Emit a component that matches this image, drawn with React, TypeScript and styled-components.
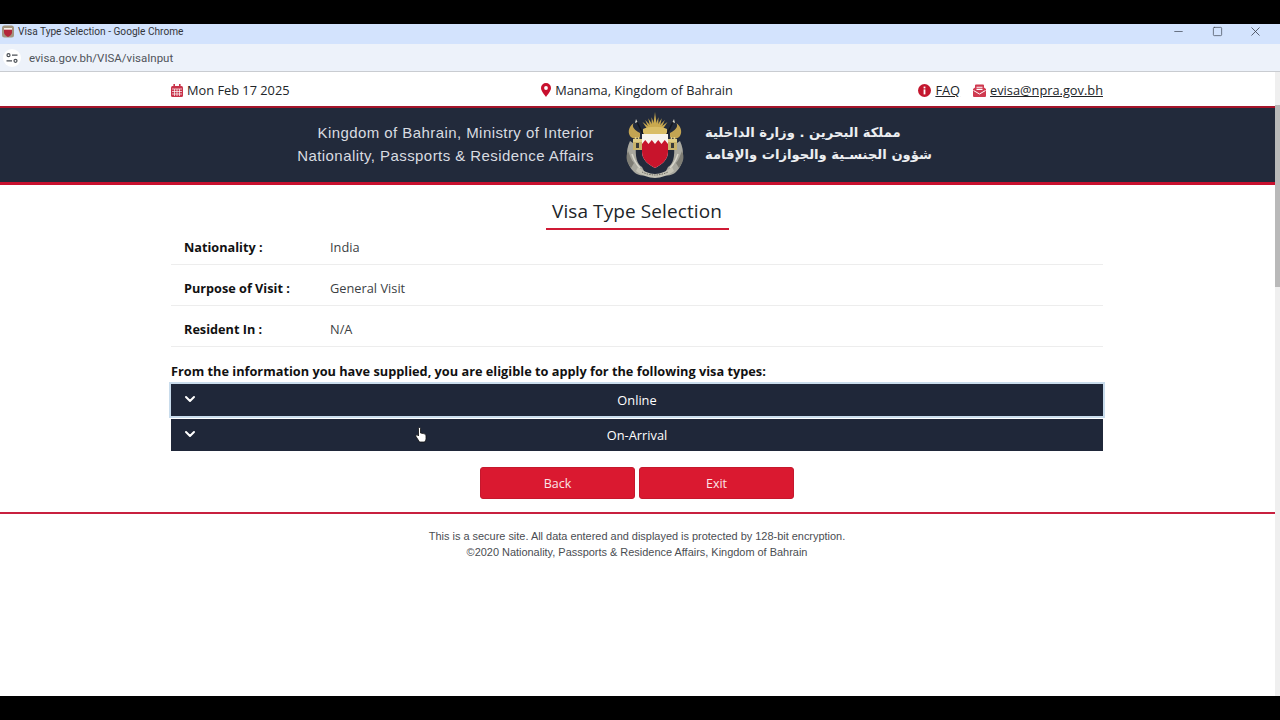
import React from 'react'
import styled, { createGlobalStyle } from 'styled-components'
import { ChevronDown, Minus, Square, X } from 'lucide-react'

const GlobalStyle = createGlobalStyle`
  html, body {
    margin: 0;
    height: 100%;
    overflow: hidden;
    background: #000;
    font-family: "Open Sans", "Noto Sans", sans-serif;
  }
`

const Screen = styled.div`
  width: 1280px;
  height: 720px;
  padding: 24px 0;
  box-sizing: border-box;
  background: #000;
  display: flex;
  flex-direction: column;
`

const TitleBar = styled.div`
  height: 20px;
  flex: none;
  box-sizing: border-box;
  padding: 0 5px 6px 2px;
  display: flex;
  align-items: center;
  background: #d3e3fd;
  color: #33363b;
  font-family: Roboto, sans-serif;
  font-size: 10.15px;
`

const TitleText = styled.span`
  margin-left: 4px;
  flex: 1;
`

const WindowButton = styled.span`
  width: 38.5px;
  display: flex;
  justify-content: center;
  color: #3c4350;
`

const AddressBar = styled.div`
  height: 28px;
  flex: none;
  display: flex;
  align-items: center;
  background: #edf2fa;
  border-bottom: 1px solid #c9ccd1;
  box-sizing: border-box;
  color: #50545a;
  font-family: Roboto, sans-serif;
  font-size: 11.5px;
  padding: 1px 0 0 3px;
`

const SiteControls = styled.span`
  width: 18px;
  height: 18px;
  margin-right: 8px;
  border-radius: 50%;
  background: #fff;
  display: flex;
  align-items: center;
  justify-content: center;
`

const Viewport = styled.div`
  flex: 1;
  display: flex;
  background: #fff;
  min-height: 0;
`

const Page = styled.div`
  flex: 1;
  min-width: 0;
  display: flex;
  flex-direction: column;
`

const Scrollbar = styled.div`
  width: 5px;
  flex: none;
  background: #efefef;
  padding-top: 33px;
`

const ScrollThumb = styled.div`
  height: 182px;
  background: #b9b9b9;
`

const TopInfo = styled.div`
  height: 34px;
  flex: none;
  box-sizing: border-box;
  padding-top: 2px;
  width: 932px;
  margin-left: 171px;
  display: grid;
  grid-template-columns: 1fr auto 1fr;
  align-items: center;
  font-size: 12.8px;
  color: #212529;
`

const InfoItem = styled.span`
  display: inline-flex;
  align-items: center;
  gap: 4px;
`

const InfoLinks = styled.div`
  display: flex;
  justify-content: flex-end;
  gap: 13px;
`

const InfoLink = styled.a`
  color: #212529;
  text-decoration: underline;
`

const Banner = styled.header`
  height: 79px;
  flex: none;
  box-sizing: border-box;
  background: #222a3b;
  border-top: 2px solid #a5142a;
  border-bottom: 3px solid #c8102e;
  display: flex;
  align-items: center;
  padding: 0 0 2px 297px;
`

const BannerEnglish = styled.div`
  width: 297px;
  text-align: right;
  white-space: nowrap;
  color: #d9dce1;
  font-family: "Liberation Sans", Arial, sans-serif;
  font-size: 15px;
  letter-spacing: 0.43px;
  line-height: 23px;
`

const Emblem = styled.svg`
  width: 70px;
  height: 74px;
  margin: 0 15px 0 26px;
  flex: none;
`

const BannerArabic = styled.div`
  width: 228px;
  color: #eceef1;
  font-family: "DejaVu Sans", sans-serif;
  font-size: 13.15px;
  font-weight: 700;
  line-height: 22px;
  direction: rtl;
  text-align: left;
  white-space: nowrap;
`

const Content = styled.main`
  width: 932px;
  margin-left: 171px;
`

const TitleWrap = styled.div`
  display: flex;
  justify-content: center;
  margin-top: 12px;
`

const PageTitle = styled.h1`
  width: 183px;
  margin: 0;
  height: 33px;
  box-sizing: border-box;
  border-bottom: 2px solid #cf1a35;
  font-size: 19px;
  font-weight: 400;
  line-height: 29px;
  letter-spacing: 0.1px;
  text-align: center;
  color: #212529;
`

const Row = styled.div`
  height: 35px;
  box-sizing: border-box;
  padding: 0 0 1px 13px;
  border-bottom: 1px solid #ededed;
  display: flex;
  align-items: center;
  font-size: 12.8px;
  color: #3c3f44;

  & + & {
    margin-top: 6px;
  }
`

const RowLabel = styled.span`
  width: 146px;
  font-size: 12.7px;
  font-weight: 700;
  color: #111;
`

const Eligible = styled.p`
  margin: 15px 0 4px;
  font-size: 12.75px;
  line-height: 18px;
  font-weight: 700;
  color: #111;
`

const Accordion = styled.div`
  display: flex;
  flex-direction: column;
  gap: 3px;
`

const AccordionBar = styled.button<{ $focused?: boolean }>`
  position: relative;
  width: 100%;
  height: 32px;
  border: 0;
  padding: 0;
  background: #1f2739;
  color: #fff;
  font-family: inherit;
  font-size: 12.8px;
  outline: ${(p) => (p.$focused ? '2px solid #c9dcec' : 'none')};
`

const Chevron = styled.span`
  position: absolute;
  left: 11px;
  top: 7px;
  display: flex;
`

const Cursor = styled.svg`
  position: absolute;
  left: 244px;
  top: 8px;
  width: 12px;
  height: 16px;
`

const Buttons = styled.div`
  display: flex;
  justify-content: center;
  gap: 4px;
  margin-top: 16px;
`

const RedButton = styled.button`
  width: 155px;
  height: 32px;
  box-sizing: border-box;
  border: 1px solid #c5182d;
  border-radius: 3px;
  background: #da1930;
  color: #fbe4e6;
  font-family: inherit;
  font-size: 12.5px;
`

const Footer = styled.footer`
  margin-top: 13px;
  border-top: 2px solid #c8203f;
  padding: 14px 1px 0 0;
  text-align: center;
  font-family: "Liberation Sans", Arial, sans-serif;
  font-size: 10.95px;
  line-height: 16px;
  color: #4a4d52;
  box-sizing: border-box;
`

const CalendarIcon = () => (
  <svg width="12" height="13" viewBox="0 0 12 13">
    <rect x="0" y="2" width="12" height="11" rx="1.5" fill="#c8334a" />
    <rect x="2.4" y="0" width="1.6" height="3" fill="#c8334a" />
    <rect x="8" y="0" width="1.6" height="3" fill="#c8334a" />
    <path d="M1 5h10M1 7.5h10M1 10h10M3.5 5v7M6 5v7M8.5 5v7" stroke="#fff" strokeWidth="0.7" />
  </svg>
)

const PinIcon = () => (
  <svg width="10" height="14" viewBox="0 0 10 14">
    <path d="M5 0a5 5 0 0 1 5 5c0 3-3.4 6.6-5 9-1.600-2.400-5-6-5-9a5 5 0 0 1 5-5z" fill="#c8102e" />
    <circle cx="5" cy="5" r="1.9" fill="#fff" />
  </svg>
)

const InfoIcon = () => (
  <svg width="13" height="13" viewBox="0 0 13 13">
    <circle cx="6.500" cy="6.500" r="6.500" fill="#c4162e" />
    <rect x="5.600" y="2.600" width="1.800" height="1.800" fill="#fff" />
    <rect x="5.600" y="5.400" width="1.800" height="5" fill="#fff" />
  </svg>
)

const MailIcon = () => (
  <svg width="13" height="13" viewBox="0 0 13 13">
    <path d="M0 5l2-1.500V1.500A1 1 0 0 1 3 .5h7a1 1 0 0 1 1 1V3.500L13 5v7a1 1 0 0 1-1 1H1a1 1 0 0 1-1-1z" fill="#cf3a50" />
    <path d="M3.500 3.200h6M3.500 5.400h6" stroke="#fff" strokeWidth="1.100" />
    <path d="M.5 6.500l6 3.500 6-3.500" stroke="#fff" strokeWidth="1" fill="none" />
  </svg>
)

const Favicon = () => (
  <svg width="12" height="13" viewBox="0 0 12 13">
    <rect x="0" y="0.500" width="12" height="12" rx="2.500" fill="#a3957f" />
    <path d="M2 3h8v4.500c0 2-2.400 3.500-4 4.500-1.600-1-4-2.500-4-4.500z" fill="#b3263a" />
    <path d="M2 3h8v1.700H2z" fill="#f3efe8" />
  </svg>
)

const TuneIcon = () => (
  <svg width="12" height="10" viewBox="0 0 12 10" fill="none" stroke="#4a4f55" strokeWidth="1.200">
    <circle cx="2.500" cy="2.200" r="1.500" />
    <path d="M6 2.200h5.500M.5 7.800h5.500" />
    <circle cx="9.500" cy="7.800" r="1.500" />
  </svg>
)

const crownRays = [-44, -33, -22, -11, 0, 11, 22, 33, 44]

// shield, towers and mantling of the coat of arms, mirrored around x = 35
const EmblemSide = () => (
  <>
    <path d="M20 26C12 22 12 18 14 16c-4 2-7 8-4 13 2 3 6 3 10 1z" fill="#c3a452" />
    <path d="M10 34C5 44 6 58 14 65c3 3 8 4 12 3l-4-8c-5-3-7-10-6-22z" fill="#a9a89f" />
    <path d="M8 44c-3 6-1 12 3 17l3-5c-3-3-4-8-6-12z" fill="#7e7d75" />
    <path d="M12 47c2 6 4 10 8 14" stroke="#d8d6cb" strokeWidth="1.500" fill="none" />
    <rect x="13" y="32" width="9" height="11" fill="#c9b36c" />
    <path d="M13 32h1.800v-2h1.600v2h1.400v-2h1.600v2H22v3h-9z" fill="#e0cd86" />
    <rect x="16" y="36" width="3" height="5" fill="#3a3a38" />
    <path d="M16 13l10 20" stroke="#15181f" strokeWidth="1.600" />
    <path d="M16 12l-1 4 2.500-1z" fill="#d8d6cb" />
  </>
)

const BahrainEmblem = () => (
  <Emblem viewBox="0 0 70 74">
    <g fill="#c9a94f">
      {crownRays.map((a) => (
        <path
          key={a}
          d={`M32.500 24L35 ${a === 0 ? 5 : 10}L37.500 24z`}
          transform={`rotate(${a} 35 28)`}
        />
      ))}
    </g>
    <path d="M23 22c6-3 18-3 24 0v6H23z" fill="#d9bd66" />
    <EmblemSide />
    <g transform="matrix(-1 0 0 1 70 0)">
      <EmblemSide />
    </g>
    <path d="M22 27h26v18c0 8-7 13-13 16-6-3-13-8-13-16z" fill="#f7f4ee" />
    <path d="M22 37l3.250-4 3.250 4 3.250-4L35 37l3.250-4 3.250 4 3.250-4L48 37v8c0 8-7 13-13 16-6-3-13-8-13-16z" fill="#c8142c" />
    <path d="M18 60c5 4 11 7 17 7s12-3 17-7l2 4c-5 4-13 7-19 7s-14-3-19-7z" fill="#c5c3b6" />
    <path d="M22 65c4 2 9 3 13 3s9-1 13-3" stroke="#55544e" strokeWidth="0.800" strokeDasharray="1.500 1" fill="none" />
  </Emblem>
)

const HandCursor = () => (
  <Cursor viewBox="0 0 12 16">
    <path
      d="M3.500 1.500c0-1.300 2-1.300 2 0V6l3 .6c1.500.4 2.500 1 2.500 2.400v2.500c0 1.500-.8 2.500-1.500 3.500H4.500L1 9.500c-.7-1.200.8-2.200 1.800-1.300l.7.800z"
      fill="#fff"
      stroke="#111"
      strokeWidth="0.800"
    />
  </Cursor>
)

const details = [
  { label: 'Nationality :', value: 'India' },
  { label: 'Purpose of Visit :', value: 'General Visit' },
  { label: 'Resident In :', value: 'N/A' },
]

const App = () => (
  <>
    <GlobalStyle />
    <Screen>
      <TitleBar>
        <Favicon />
        <TitleText>Visa Type Selection - Google Chrome</TitleText>
        <WindowButton>
          <Minus size={13} strokeWidth={1.300} />
        </WindowButton>
        <WindowButton>
          <Square size={11} strokeWidth={1.500} />
        </WindowButton>
        <WindowButton>
          <X size={15} strokeWidth={1.300} />
        </WindowButton>
      </TitleBar>
      <AddressBar>
        <SiteControls>
          <TuneIcon />
        </SiteControls>
        evisa.gov.bh/VISA/visaInput
      </AddressBar>
      <Viewport>
        <Page>
          <TopInfo>
            <InfoItem>
              <CalendarIcon /> Mon Feb 17 2025
            </InfoItem>
            <InfoItem>
              <PinIcon /> Manama, Kingdom of Bahrain
            </InfoItem>
            <InfoLinks>
              <InfoItem>
                <InfoIcon /> <InfoLink>FAQ</InfoLink>
              </InfoItem>
              <InfoItem>
                <MailIcon /> <InfoLink>evisa@npra.gov.bh</InfoLink>
              </InfoItem>
            </InfoLinks>
          </TopInfo>
          <Banner>
            <BannerEnglish>
              Kingdom of Bahrain, Ministry of Interior
              <br />
              Nationality, Passports &amp; Residence Affairs
            </BannerEnglish>
            <BahrainEmblem />
            <BannerArabic>
              مملكة البحرين . وزارة الداخلية
              <br />
              شؤون الجنسـية والجوازات والإقامة
            </BannerArabic>
          </Banner>
          <Content>
            <TitleWrap>
              <PageTitle>Visa Type Selection</PageTitle>
            </TitleWrap>
            {details.map((d) => (
              <Row key={d.label}>
                <RowLabel>{d.label}</RowLabel>
                {d.value}
              </Row>
            ))}
            <Eligible>
              From the information you have supplied, you are eligible to apply for the following visa types:
            </Eligible>
            <Accordion>
              <AccordionBar $focused>
                <Chevron>
                  <ChevronDown size={16} strokeWidth={3} />
                </Chevron>
                Online
              </AccordionBar>
              <AccordionBar>
                <Chevron>
                  <ChevronDown size={16} strokeWidth={3} />
                </Chevron>
                On-Arrival
                <HandCursor />
              </AccordionBar>
            </Accordion>
            <Buttons>
              <RedButton>Back</RedButton>
              <RedButton>Exit</RedButton>
            </Buttons>
          </Content>
          <Footer>
            This is a secure site. All data entered and displayed is protected by 128-bit encryption.
            <br />
            ©2020 Nationality, Passports &amp; Residence Affairs, Kingdom of Bahrain
          </Footer>
        </Page>
        <Scrollbar>
          <ScrollThumb />
        </Scrollbar>
      </Viewport>
    </Screen>
  </>
)

export default App
